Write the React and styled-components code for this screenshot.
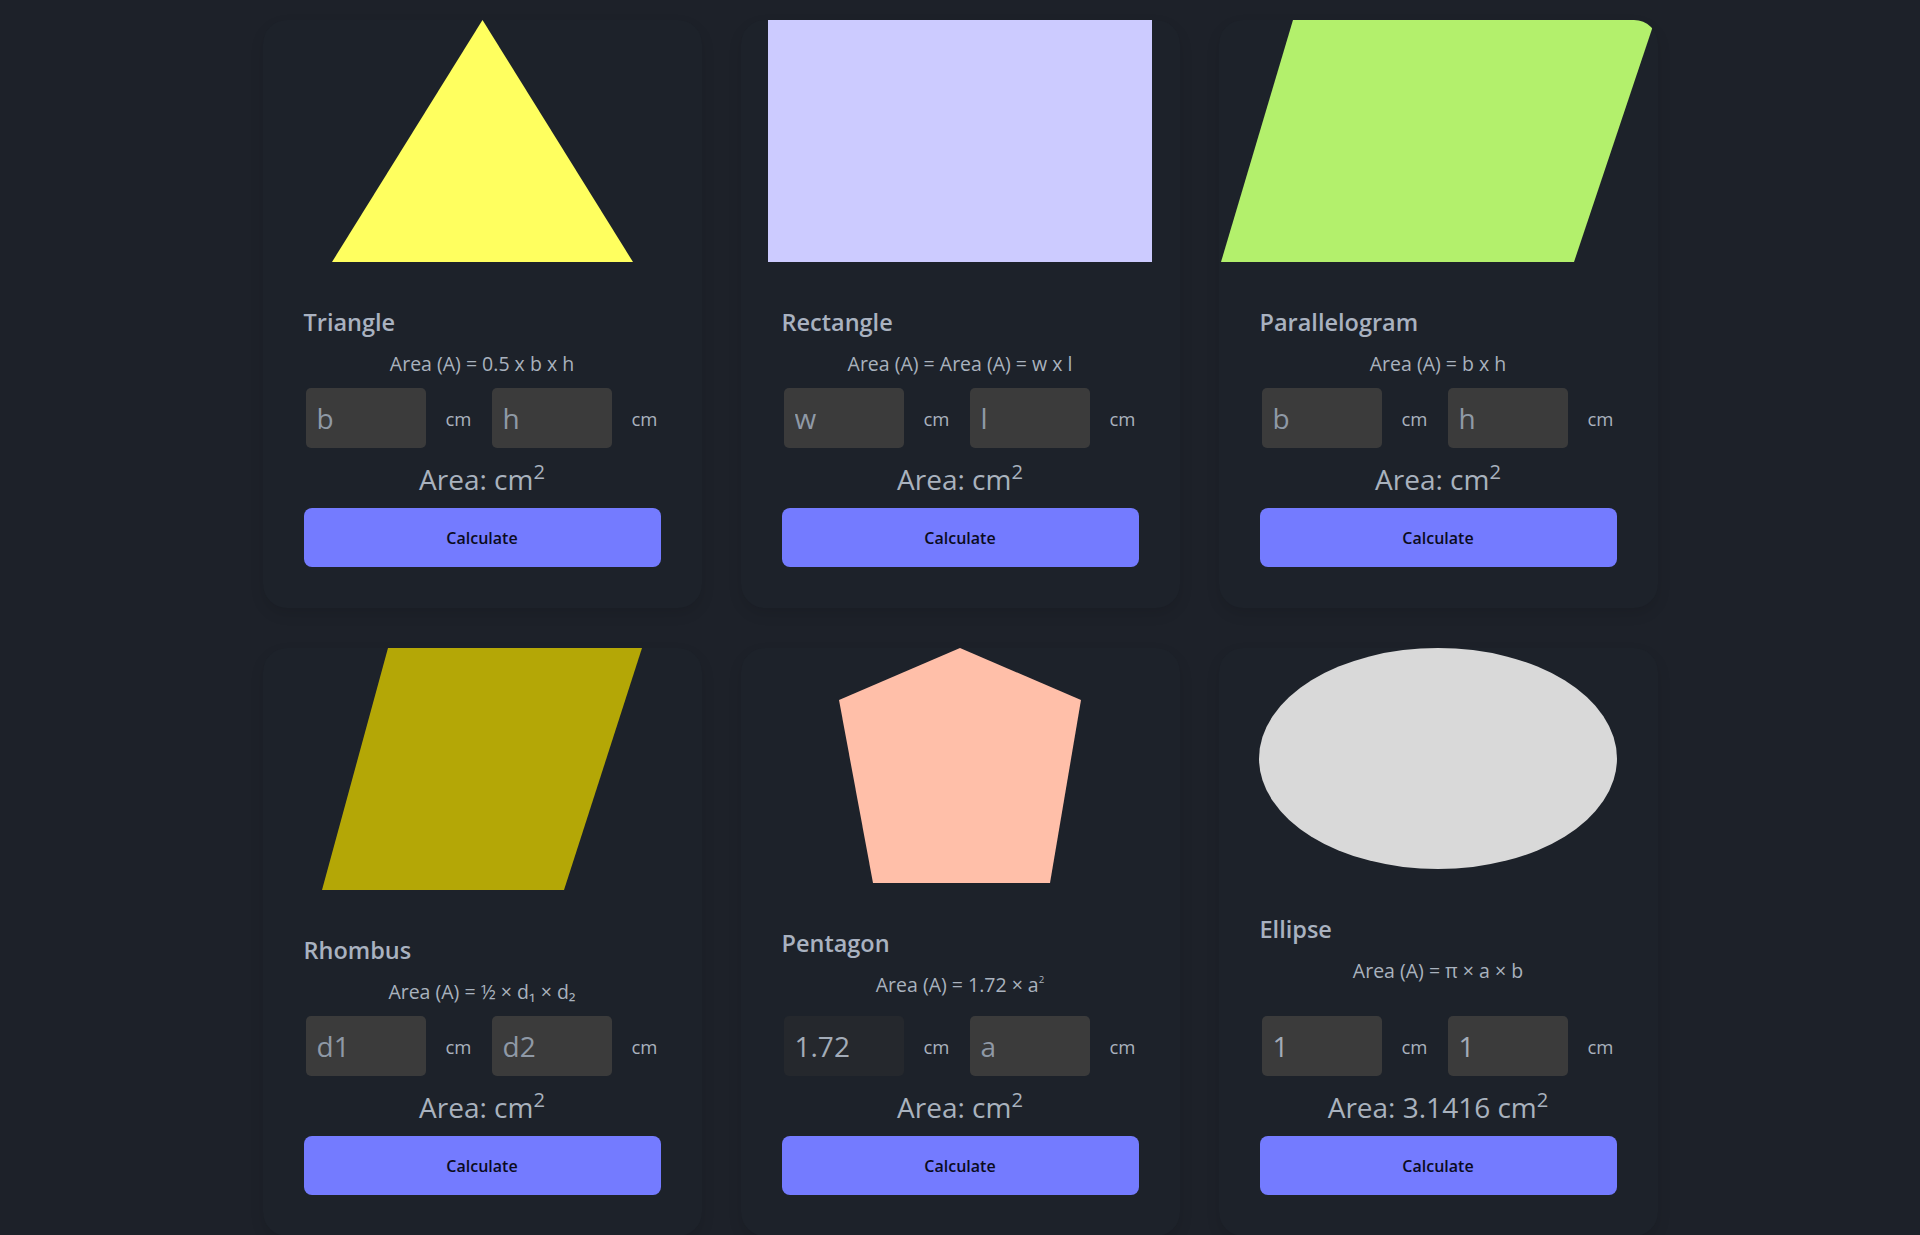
import React from "react";
import styled, { createGlobalStyle } from "styled-components";

const Global = createGlobalStyle`
  html { scrollbar-width: none; }
  html::-webkit-scrollbar { display: none; }
  body {
    margin: 0;
    background: #1d2129;
    font-family: "Open Sans", "Noto Sans", sans-serif;
    color: #a9b2be;
  }
`;

const Grid = styled.main`
  width: 1395px;
  margin: 0 auto;
  padding-top: 20px;
  display: grid;
  grid-template-columns: repeat(3, 439px);
  column-gap: 39px;
  row-gap: 40px;
  align-items: stretch;
`;

const Card = styled.section`
  display: flex;
  flex-direction: column;
  padding: 0 41px 41px;
  border-radius: 24px;
  overflow: hidden;
  background: #1d222a;
  box-shadow: 0 6px 14px rgba(0, 0, 0, 0.1);
`;

const ShapeWrap = styled.div`
  height: ${(p) => p.$h}px;
  display: flex;
  justify-content: center;
  align-items: flex-start;
  margin: 0 -41px;
  svg { display: block; flex-shrink: 0; }
`;

const Title = styled.h2`
  margin: 45px 0 0;
  font-size: 23.5px;
  line-height: 30px;
  font-weight: 600;
  color: #a9b2c0;
`;

const Formula = styled.p`
  margin: 15px 0 12px;
  font-size: 19.5px;
  line-height: 24px;
  text-align: center;
  color: #a9b2be;
  sup { font-size: 0.5em; vertical-align: 0.9em; line-height: 0; }
`;

const InputRow = styled.div`
  margin-top: auto;
  height: 60px;
  display: flex;
  align-items: center;
  gap: 20px;
  padding-left: 2px;
`;

const Field = styled.input`
  box-sizing: border-box;
  width: 120px;
  height: 60px;
  border: none;
  outline: none;
  border-radius: 5px;
  padding: 0 11px;
  font-family: inherit;
  font-size: 28px;
  color: #a3acb8;
  background: ${(p) => (p.disabled ? "#25282d" : "#3b3b3b")};
  &::placeholder { color: #8f99a6; }
`;

const Unit = styled.span`
  font-size: 18.5px;
  color: #a9b2be;
`;

const Result = styled.div`
  margin-top: 13px;
  font-size: 28px;
  line-height: 36px;
  text-align: center;
  color: #a9b2be;
  sup { font-size: 0.72em; line-height: 0; vertical-align: 0.55em; }
`;

const Button = styled.button`
  margin-top: 11px;
  height: 59px;
  width: 100%;
  border: none;
  border-radius: 8px;
  background: #747bff;
  color: #0b0b1e;
  font-family: inherit;
  font-size: 16px;
  font-weight: 600;
  cursor: pointer;
`;

const shapes = [
  {
    name: "Triangle",
    h: 242,
    svg: (
      <svg width="301" height="242" viewBox="0 0 301 242">
        <polygon points="150.5,0 301,242 0,242" fill="#ffff5f" />
      </svg>
    ),
    formula: <>Area (A) = 0.5 x b x h</>,
    inputs: [{ ph: "b" }, { ph: "h" }],
    result: "",
  },
  {
    name: "Rectangle",
    h: 242,
    svg: (
      <svg width="384" height="242" viewBox="0 0 384 242">
        <rect width="384" height="242" fill="#cccbff" />
      </svg>
    ),
    formula: <>Area (A) = Area (A) = w x l</>,
    inputs: [{ ph: "w" }, { ph: "l" }],
    result: "",
  },
  {
    name: "Parallelogram",
    h: 242,
    svg: (
      <svg width="434" height="242" viewBox="0 0 434 242">
        <polygon points="72,0 434,0 353,242 0,242" fill="#b3f06c" />
      </svg>
    ),
    formula: <>Area (A) = b x h</>,
    inputs: [{ ph: "b" }, { ph: "h" }],
    result: "",
  },
  {
    name: "Rhombus",
    h: 242,
    svg: (
      <svg width="320" height="242" viewBox="0 0 320 242">
        <polygon points="66,0 320,0 242,242 0,242" fill="#b4a706" />
      </svg>
    ),
    formula: <>Area (A) = ½ × d₁ × d₂</>,
    inputs: [{ ph: "d1" }, { ph: "d2" }],
    result: "",
  },
  {
    name: "Pentagon",
    h: 235,
    svg: (
      <svg width="242" height="235" viewBox="0 0 242 235">
        <polygon points="121,0 242,52 211,235 34,235 0,52" fill="#ffbfa9" />
      </svg>
    ),
    formula: (
      <>
        Area (A) = 1.72 × a<sup>2</sup>
      </>
    ),
    inputs: [{ value: "1.72", disabled: true }, { ph: "a" }],
    result: "",
  },
  {
    name: "Ellipse",
    h: 221,
    svg: (
      <svg width="358" height="221" viewBox="0 0 358 221">
        <ellipse cx="179" cy="110.5" rx="179" ry="110.5" fill="#d9d9d9" />
      </svg>
    ),
    formula: <>Area (A) = π × a × b</>,
    inputs: [{ value: "1" }, { value: "1" }],
    result: "3.1416 ",
  },
];

function ShapeCard({ s }) {
  return (
    <Card>
      <ShapeWrap $h={s.h}>{s.svg}</ShapeWrap>
      <Title>{s.name}</Title>
      <Formula>{s.formula}</Formula>
      <InputRow>
        {s.inputs.map((inp, i) => (
          <React.Fragment key={i}>
            <Field
              type="text"
              placeholder={inp.ph}
              defaultValue={inp.value}
              disabled={inp.disabled}
            />
            <Unit>cm</Unit>
          </React.Fragment>
        ))}
      </InputRow>
      <Result>
        Area: {s.result}cm<sup>2</sup>
      </Result>
      <Button>Calculate</Button>
    </Card>
  );
}

export default function App() {
  return (
    <>
      <Global />
      <Grid>
        {shapes.map((s) => (
          <ShapeCard key={s.name} s={s} />
        ))}
      </Grid>
    </>
  );
}
